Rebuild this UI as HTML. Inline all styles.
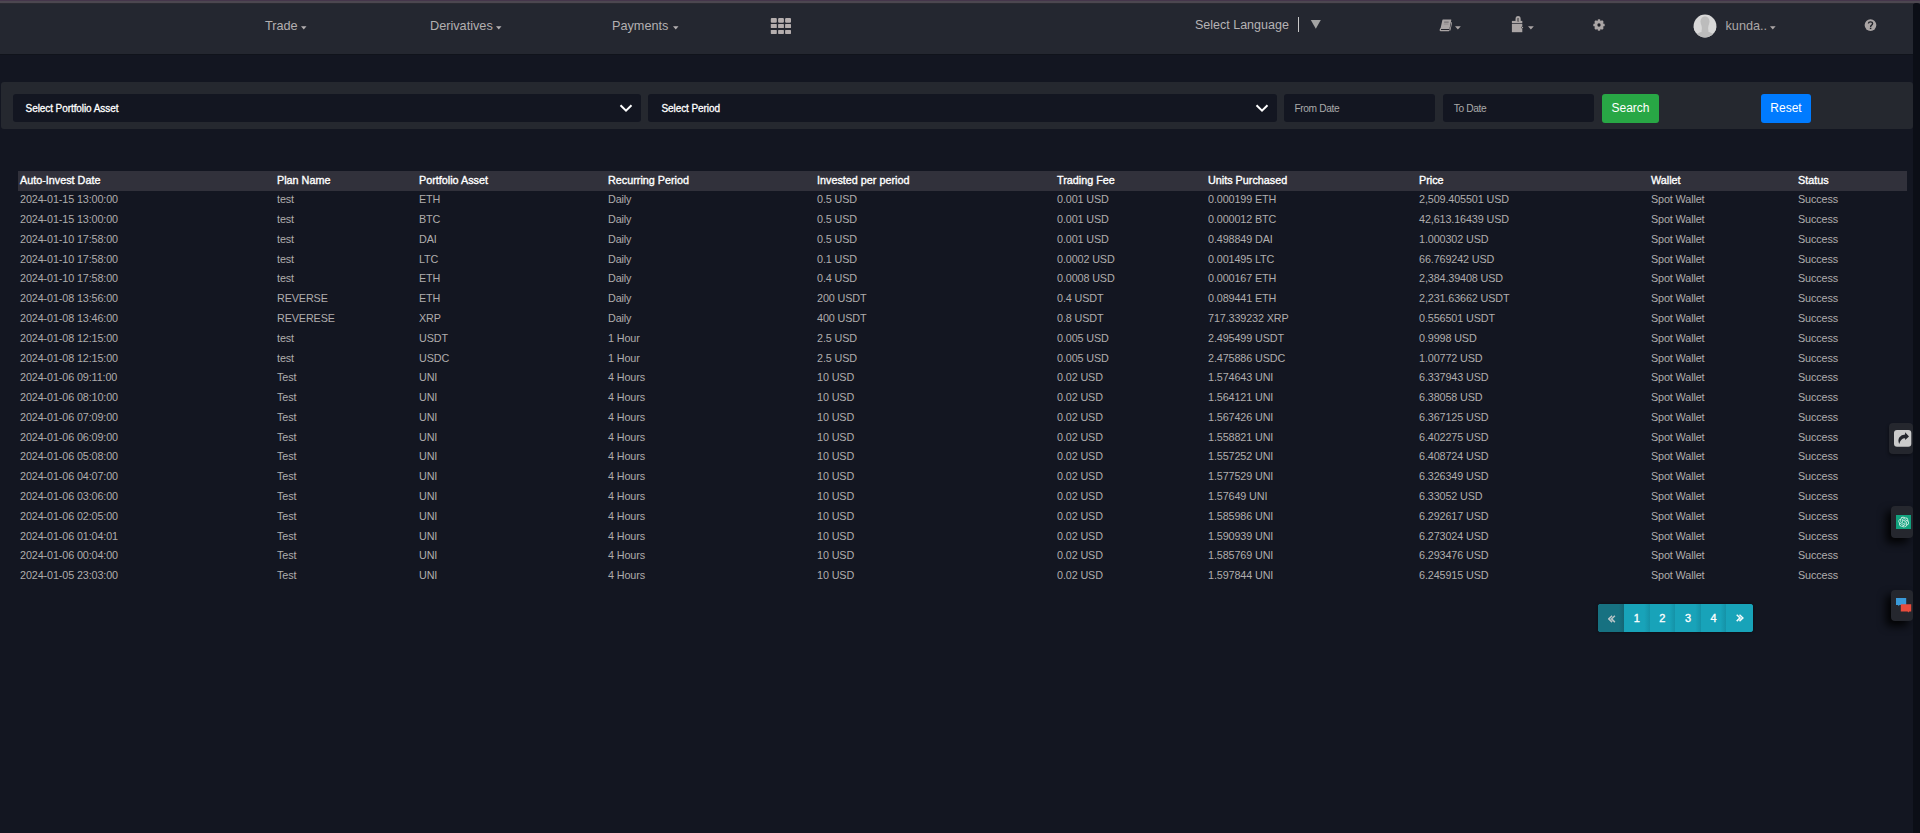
<!DOCTYPE html>
<html><head><meta charset="utf-8">
<style>
*{margin:0;padding:0;box-sizing:border-box}
html,body{width:1920px;height:833px;overflow:hidden;background:#131621;font-family:"Liberation Sans",sans-serif}
body{position:relative}
.a{position:absolute}
#topline{left:0;top:0;width:1920px;height:4px;background:linear-gradient(#45364b 0,#45364b 1px,#4c4750 1px,#4c4750 3px,#2b2b32 3px,#2b2b32 4px)}
#nav{left:0;top:4px;width:1913px;height:50px;background:#242730}
.nl{position:absolute;font-size:12.7px;color:#b3afb0;white-space:nowrap;line-height:15px}
.caret{position:absolute;width:0;height:0;border-left:2.7px solid transparent;border-right:2.7px solid transparent;border-top:3.4px solid #b3afb0}
#panel{left:1px;top:82px;width:1912px;height:47px;background:#25282f;border-radius:3px}
.sel{position:absolute;top:94px;height:28px;background:#131621;border-radius:3px}
.st{position:absolute;top:9px;font-size:10px;letter-spacing:-0.08px;color:#fff;-webkit-text-stroke:0.3px #fff;line-height:11px;white-space:nowrap}
.dt{color:#a9a9a9;-webkit-text-stroke:0;font-size:10.2px;letter-spacing:-0.35px;top:8.6px}
.chev{position:absolute;top:8.8px}
.btn{position:absolute;top:94px;height:29px;border-radius:3px;color:#fff;font-size:12px;text-align:center;line-height:29px}
#thead{left:18px;top:171px;width:1889px;height:20px;background:#31313b}
.th{position:absolute;top:3px;font-size:10.8px;color:#fff;-webkit-text-stroke:0.35px #fff;white-space:nowrap;line-height:13px}
.tr{position:absolute;left:0;height:20px;width:1900px}
.td{position:absolute;top:2px;font-size:10.8px;letter-spacing:-0.12px;color:#b0adad;white-space:nowrap;line-height:13px}
#pag{left:1598px;top:604px;width:155px;height:28px;border-radius:3px;overflow:hidden;background:#17a2b8;box-shadow:0 0 3px rgba(0,0,0,.5)}
.pg{position:absolute;top:0;height:28px;width:25.6px;color:#fff;font-size:11px;-webkit-text-stroke:0.35px #fff;text-align:center;line-height:28px;background:linear-gradient(90deg,#18a3b9 0,#18a3b9 78%,#1592a7 100%)}
.fl{position:absolute;background:#25272e;border-radius:4px;box-shadow:-5px 5px 8px rgba(0,0,0,.9)}
#scroll{left:1913px;top:3px;width:7px;height:830px;background:#0b0e16;border-radius:3px 3px 0 0}
#navsh{left:0;top:54px;width:1913px;height:1px;background:#10131b}
</style></head><body>
<div id="topline" class="a"></div>
<div id="nav" class="a">
  <div class="nl" style="left:265px;top:15px">Trade</div>
  <svg class="a" style="left:300.5px;top:21.6px" width="6" height="4" viewBox="0 0 6 4"><path d="M0 0.2 H5.5 L2.75 3.4 Z" fill="#b3afb0"/></svg>
  <div class="nl" style="left:430px;top:15px">Derivatives</div>
  <svg class="a" style="left:495.5px;top:21.6px" width="6" height="4" viewBox="0 0 6 4"><path d="M0 0.2 H5.5 L2.75 3.4 Z" fill="#b3afb0"/></svg>
  <div class="nl" style="left:612px;top:15px">Payments</div>
  <svg class="a" style="left:672.5px;top:21.6px" width="6" height="4" viewBox="0 0 6 4"><path d="M0 0.2 H5.5 L2.75 3.4 Z" fill="#b3afb0"/></svg>
  <svg class="a" style="left:770px;top:14px" width="22" height="16" viewBox="0 0 22 16">
    <g fill="#b5aeae">
      <rect x="0.8" y="0" width="6" height="4.8" rx="1"/><rect x="8.1" y="0" width="5.8" height="4.8" rx="1"/><rect x="15.1" y="0" width="5.9" height="4.8" rx="1"/>
      <rect x="0.8" y="5.9" width="6" height="4.1" rx="0.6"/><rect x="8.1" y="5.9" width="5.8" height="4.1" rx="0.6"/><rect x="15.1" y="5.9" width="5.9" height="4.1" rx="0.6"/>
      <rect x="0.8" y="11.9" width="6" height="4" rx="0.6"/><rect x="8.1" y="11.9" width="5.8" height="4" rx="0.6"/><rect x="15.1" y="11.9" width="5.9" height="4" rx="0.6"/>
    </g>
  </svg>
  <div class="nl" style="left:1195px;top:14px;font-size:12.5px;color:#b6b3b5">Select Language</div>
  <div class="a" style="left:1298px;top:13px;width:1.2px;height:14.8px;background:#c8c8c8"></div>
  <svg class="a" style="left:1310px;top:15px" width="12" height="10" viewBox="0 0 12 10"><path d="M0.8 1 L10.8 1 L5.8 9.8 Z" fill="#a3a3a3"/></svg>
  <!-- book -->
  <svg class="a" style="left:1439px;top:15px" width="14" height="13" viewBox="0 0 14 13">
    <path d="M3.9 0.6 H12 Q12.4 0.6 12.3 1.1 L10.5 9.4 H1.5 L3.4 1.1 Q3.5 0.6 3.9 0.6 Z" fill="#aaa5a5"/>
    <path d="M1.5 9 H10.6 L10.4 11.6 Q10.3 12.2 9.7 12.2 H1.5 Q0.4 12.2 0.6 10.8 Z" fill="#aaa5a5"/>
    <rect x="2" y="10" width="8" height="1" fill="#25262d"/>
    <path d="M11.5 3 Q13.2 3 13 4.2 L11.4 11.6 H10.6 L12.2 4.2 Q12.3 3.6 11.5 3.6 Z" fill="#aaa5a5"/>
    <rect x="5.1" y="2.4" width="4.6" height="1.5" fill="#807c7e"/>
    <rect x="4.8" y="4.5" width="4.6" height="1.1" fill="#938f90"/>
  </svg>
  <svg class="a" style="left:1454.6px;top:21.6px" width="6" height="4" viewBox="0 0 6 4"><path d="M0 0.2 H5.8 L2.9 3.5 Z" fill="#aaa5a5"/></svg>
  <!-- wallet -->
  <svg class="a" style="left:1511px;top:11px" width="13" height="18" viewBox="0 0 13 18">
    <path fill-rule="evenodd" d="M7.1 1 Q9.7 1 9.7 4.2 V7.4 H4.5 V4.2 Q4.5 1 7.1 1 Z M6.5 3.2 V6.8 H7.8 V3.2 Z" fill="#aaa5a5"/>
    <rect x="0.9" y="5.9" width="10.4" height="2.2" fill="#aaa5a5"/>
    <rect x="6.3" y="3.2" width="1.7" height="3.6" fill="#6d6a6c"/>
    <rect x="0.9" y="8.8" width="10.4" height="8.4" fill="#aaa5a5"/>
    <circle cx="11.4" cy="12.6" r="1.1" fill="#2a2a30"/>
    <circle cx="11.6" cy="12.6" r="0.55" fill="#d0cccc"/>
  </svg>
  <svg class="a" style="left:1528.3px;top:21.6px" width="6" height="4" viewBox="0 0 6 4"><path d="M0 0.2 H5.8 L2.9 3.5 Z" fill="#aaa5a5"/></svg>
  <!-- gear -->
  <svg class="a" style="left:1591.7px;top:14.35px" width="14" height="14" viewBox="0 0 14 14">
    <g transform="translate(7 7)" fill="#aaa5a5">
      <circle r="4.3"/>
      <g id="teeth"><rect x="-1.45" y="-5.7" width="2.9" height="3.2" rx="1.2"/></g>
      <use href="#teeth" transform="rotate(45)"/><use href="#teeth" transform="rotate(90)"/><use href="#teeth" transform="rotate(135)"/>
      <use href="#teeth" transform="rotate(180)"/><use href="#teeth" transform="rotate(225)"/><use href="#teeth" transform="rotate(270)"/><use href="#teeth" transform="rotate(315)"/>
      <circle r="1.65" fill="#1c1e25"/>
    </g>
  </svg>
  <!-- avatar -->
  <svg class="a" style="left:1693.3px;top:10.3px" width="24" height="24" viewBox="0 0 24 24">
    <defs><clipPath id="av"><circle cx="12" cy="12" r="11.4"/></clipPath></defs>
    <circle cx="12" cy="12" r="11.4" fill="#d8d8d8"/>
    <g clip-path="url(#av)">
      <ellipse cx="12" cy="26.5" rx="12.5" ry="9" fill="#bcbcbc"/>
      <rect x="8.6" y="9" width="6.8" height="10" fill="#bcbcbc"/>
      <ellipse cx="4.4" cy="14.2" rx="4.2" ry="3.8" fill="#d8d8d8"/>
      <ellipse cx="19.6" cy="14.2" rx="4.2" ry="3.8" fill="#d8d8d8"/>
      <ellipse cx="12" cy="7.6" rx="4.5" ry="5.4" fill="#bcbcbc"/>
    </g>
  </svg>
  <div class="nl" style="left:1725.5px;top:14.6px;color:#aca7a7">kunda..</div>
  <svg class="a" style="left:1769.8px;top:21.6px" width="6" height="4" viewBox="0 0 6 4"><path d="M0 0.2 H5.6 L2.8 3.4 Z" fill="#aca7a7"/></svg>
  <!-- help -->
  <svg class="a" style="left:1864px;top:15.3px" width="13" height="13" viewBox="0 0 13 13">
    <circle cx="6.5" cy="6.1" r="5.85" fill="#aaa5a5"/>
    <path d="M4.4 4.5 Q4.5 2.8 6.5 2.8 Q8.6 2.8 8.6 4.6 Q8.6 5.7 7.4 6.3 Q6.6 6.7 6.6 8.0" stroke="#1f2128" stroke-width="1.35" fill="none"/>
    <rect x="5.85" y="8.7" width="1.5" height="1.4" fill="#1f2128"/>
  </svg>
</div>

<div id="navsh" class="a"></div>
<div id="panel" class="a"></div>
<div class="sel" style="left:13px;width:628px">
  <div class="st" style="left:12.6px">Select Portfolio Asset</div>
  <svg class="chev" style="left:606px" width="14" height="10" viewBox="0 0 14 10"><path d="M1.5 2.2 L7 7.6 L12.5 2.2" stroke="#fff" stroke-width="2" fill="none"/></svg>
</div>
<div class="sel" style="left:648px;width:629px">
  <div class="st" style="left:13.5px">Select Period</div>
  <svg class="chev" style="left:607px" width="14" height="10" viewBox="0 0 14 10"><path d="M1.5 2.2 L7 7.6 L12.5 2.2" stroke="#fff" stroke-width="2" fill="none"/></svg>
</div>
<div class="sel" style="left:1284px;width:151px">
  <div class="st dt" style="left:10.4px">From Date</div>
</div>
<div class="sel" style="left:1443px;width:151px">
  <div class="st dt" style="left:10.7px">To Date</div>
</div>
<div class="btn" style="left:1602px;width:57px;background:#28a745">Search</div>
<div class="btn" style="left:1761px;width:50px;background:#007bff">Reset</div>

<div id="thead" class="a"><div class="th" style="left:2px">Auto-Invest Date</div><div class="th" style="left:259px">Plan Name</div><div class="th" style="left:401px">Portfolio Asset</div><div class="th" style="left:590px">Recurring Period</div><div class="th" style="left:799px">Invested per period</div><div class="th" style="left:1039px">Trading Fee</div><div class="th" style="left:1190px">Units Purchased</div><div class="th" style="left:1401px">Price</div><div class="th" style="left:1633px">Wallet</div><div class="th" style="left:1780px">Status</div></div>
<div class="tr" style="top:191px"><div class="td" style="left:20px">2024-01-15 13:00:00</div><div class="td" style="left:277px">test</div><div class="td" style="left:419px">ETH</div><div class="td" style="left:608px">Daily</div><div class="td" style="left:817px">0.5 USD</div><div class="td" style="left:1057px">0.001 USD</div><div class="td" style="left:1208px">0.000199 ETH</div><div class="td" style="left:1419px">2,509.405501 USD</div><div class="td" style="left:1651px">Spot Wallet</div><div class="td" style="left:1798px">Success</div></div>
<div class="tr" style="top:211px"><div class="td" style="left:20px">2024-01-15 13:00:00</div><div class="td" style="left:277px">test</div><div class="td" style="left:419px">BTC</div><div class="td" style="left:608px">Daily</div><div class="td" style="left:817px">0.5 USD</div><div class="td" style="left:1057px">0.001 USD</div><div class="td" style="left:1208px">0.000012 BTC</div><div class="td" style="left:1419px">42,613.16439 USD</div><div class="td" style="left:1651px">Spot Wallet</div><div class="td" style="left:1798px">Success</div></div>
<div class="tr" style="top:231px"><div class="td" style="left:20px">2024-01-10 17:58:00</div><div class="td" style="left:277px">test</div><div class="td" style="left:419px">DAI</div><div class="td" style="left:608px">Daily</div><div class="td" style="left:817px">0.5 USD</div><div class="td" style="left:1057px">0.001 USD</div><div class="td" style="left:1208px">0.498849 DAI</div><div class="td" style="left:1419px">1.000302 USD</div><div class="td" style="left:1651px">Spot Wallet</div><div class="td" style="left:1798px">Success</div></div>
<div class="tr" style="top:251px"><div class="td" style="left:20px">2024-01-10 17:58:00</div><div class="td" style="left:277px">test</div><div class="td" style="left:419px">LTC</div><div class="td" style="left:608px">Daily</div><div class="td" style="left:817px">0.1 USD</div><div class="td" style="left:1057px">0.0002 USD</div><div class="td" style="left:1208px">0.001495 LTC</div><div class="td" style="left:1419px">66.769242 USD</div><div class="td" style="left:1651px">Spot Wallet</div><div class="td" style="left:1798px">Success</div></div>
<div class="tr" style="top:270px"><div class="td" style="left:20px">2024-01-10 17:58:00</div><div class="td" style="left:277px">test</div><div class="td" style="left:419px">ETH</div><div class="td" style="left:608px">Daily</div><div class="td" style="left:817px">0.4 USD</div><div class="td" style="left:1057px">0.0008 USD</div><div class="td" style="left:1208px">0.000167 ETH</div><div class="td" style="left:1419px">2,384.39408 USD</div><div class="td" style="left:1651px">Spot Wallet</div><div class="td" style="left:1798px">Success</div></div>
<div class="tr" style="top:290px"><div class="td" style="left:20px">2024-01-08 13:56:00</div><div class="td" style="left:277px">REVERSE</div><div class="td" style="left:419px">ETH</div><div class="td" style="left:608px">Daily</div><div class="td" style="left:817px">200 USDT</div><div class="td" style="left:1057px">0.4 USDT</div><div class="td" style="left:1208px">0.089441 ETH</div><div class="td" style="left:1419px">2,231.63662 USDT</div><div class="td" style="left:1651px">Spot Wallet</div><div class="td" style="left:1798px">Success</div></div>
<div class="tr" style="top:310px"><div class="td" style="left:20px">2024-01-08 13:46:00</div><div class="td" style="left:277px">REVERESE</div><div class="td" style="left:419px">XRP</div><div class="td" style="left:608px">Daily</div><div class="td" style="left:817px">400 USDT</div><div class="td" style="left:1057px">0.8 USDT</div><div class="td" style="left:1208px">717.339232 XRP</div><div class="td" style="left:1419px">0.556501 USDT</div><div class="td" style="left:1651px">Spot Wallet</div><div class="td" style="left:1798px">Success</div></div>
<div class="tr" style="top:330px"><div class="td" style="left:20px">2024-01-08 12:15:00</div><div class="td" style="left:277px">test</div><div class="td" style="left:419px">USDT</div><div class="td" style="left:608px">1 Hour</div><div class="td" style="left:817px">2.5 USD</div><div class="td" style="left:1057px">0.005 USD</div><div class="td" style="left:1208px">2.495499 USDT</div><div class="td" style="left:1419px">0.9998 USD</div><div class="td" style="left:1651px">Spot Wallet</div><div class="td" style="left:1798px">Success</div></div>
<div class="tr" style="top:350px"><div class="td" style="left:20px">2024-01-08 12:15:00</div><div class="td" style="left:277px">test</div><div class="td" style="left:419px">USDC</div><div class="td" style="left:608px">1 Hour</div><div class="td" style="left:817px">2.5 USD</div><div class="td" style="left:1057px">0.005 USD</div><div class="td" style="left:1208px">2.475886 USDC</div><div class="td" style="left:1419px">1.00772 USD</div><div class="td" style="left:1651px">Spot Wallet</div><div class="td" style="left:1798px">Success</div></div>
<div class="tr" style="top:369px"><div class="td" style="left:20px">2024-01-06 09:11:00</div><div class="td" style="left:277px">Test</div><div class="td" style="left:419px">UNI</div><div class="td" style="left:608px">4 Hours</div><div class="td" style="left:817px">10 USD</div><div class="td" style="left:1057px">0.02 USD</div><div class="td" style="left:1208px">1.574643 UNI</div><div class="td" style="left:1419px">6.337943 USD</div><div class="td" style="left:1651px">Spot Wallet</div><div class="td" style="left:1798px">Success</div></div>
<div class="tr" style="top:389px"><div class="td" style="left:20px">2024-01-06 08:10:00</div><div class="td" style="left:277px">Test</div><div class="td" style="left:419px">UNI</div><div class="td" style="left:608px">4 Hours</div><div class="td" style="left:817px">10 USD</div><div class="td" style="left:1057px">0.02 USD</div><div class="td" style="left:1208px">1.564121 UNI</div><div class="td" style="left:1419px">6.38058 USD</div><div class="td" style="left:1651px">Spot Wallet</div><div class="td" style="left:1798px">Success</div></div>
<div class="tr" style="top:409px"><div class="td" style="left:20px">2024-01-06 07:09:00</div><div class="td" style="left:277px">Test</div><div class="td" style="left:419px">UNI</div><div class="td" style="left:608px">4 Hours</div><div class="td" style="left:817px">10 USD</div><div class="td" style="left:1057px">0.02 USD</div><div class="td" style="left:1208px">1.567426 UNI</div><div class="td" style="left:1419px">6.367125 USD</div><div class="td" style="left:1651px">Spot Wallet</div><div class="td" style="left:1798px">Success</div></div>
<div class="tr" style="top:429px"><div class="td" style="left:20px">2024-01-06 06:09:00</div><div class="td" style="left:277px">Test</div><div class="td" style="left:419px">UNI</div><div class="td" style="left:608px">4 Hours</div><div class="td" style="left:817px">10 USD</div><div class="td" style="left:1057px">0.02 USD</div><div class="td" style="left:1208px">1.558821 UNI</div><div class="td" style="left:1419px">6.402275 USD</div><div class="td" style="left:1651px">Spot Wallet</div><div class="td" style="left:1798px">Success</div></div>
<div class="tr" style="top:448px"><div class="td" style="left:20px">2024-01-06 05:08:00</div><div class="td" style="left:277px">Test</div><div class="td" style="left:419px">UNI</div><div class="td" style="left:608px">4 Hours</div><div class="td" style="left:817px">10 USD</div><div class="td" style="left:1057px">0.02 USD</div><div class="td" style="left:1208px">1.557252 UNI</div><div class="td" style="left:1419px">6.408724 USD</div><div class="td" style="left:1651px">Spot Wallet</div><div class="td" style="left:1798px">Success</div></div>
<div class="tr" style="top:468px"><div class="td" style="left:20px">2024-01-06 04:07:00</div><div class="td" style="left:277px">Test</div><div class="td" style="left:419px">UNI</div><div class="td" style="left:608px">4 Hours</div><div class="td" style="left:817px">10 USD</div><div class="td" style="left:1057px">0.02 USD</div><div class="td" style="left:1208px">1.577529 UNI</div><div class="td" style="left:1419px">6.326349 USD</div><div class="td" style="left:1651px">Spot Wallet</div><div class="td" style="left:1798px">Success</div></div>
<div class="tr" style="top:488px"><div class="td" style="left:20px">2024-01-06 03:06:00</div><div class="td" style="left:277px">Test</div><div class="td" style="left:419px">UNI</div><div class="td" style="left:608px">4 Hours</div><div class="td" style="left:817px">10 USD</div><div class="td" style="left:1057px">0.02 USD</div><div class="td" style="left:1208px">1.57649 UNI</div><div class="td" style="left:1419px">6.33052 USD</div><div class="td" style="left:1651px">Spot Wallet</div><div class="td" style="left:1798px">Success</div></div>
<div class="tr" style="top:508px"><div class="td" style="left:20px">2024-01-06 02:05:00</div><div class="td" style="left:277px">Test</div><div class="td" style="left:419px">UNI</div><div class="td" style="left:608px">4 Hours</div><div class="td" style="left:817px">10 USD</div><div class="td" style="left:1057px">0.02 USD</div><div class="td" style="left:1208px">1.585986 UNI</div><div class="td" style="left:1419px">6.292617 USD</div><div class="td" style="left:1651px">Spot Wallet</div><div class="td" style="left:1798px">Success</div></div>
<div class="tr" style="top:528px"><div class="td" style="left:20px">2024-01-06 01:04:01</div><div class="td" style="left:277px">Test</div><div class="td" style="left:419px">UNI</div><div class="td" style="left:608px">4 Hours</div><div class="td" style="left:817px">10 USD</div><div class="td" style="left:1057px">0.02 USD</div><div class="td" style="left:1208px">1.590939 UNI</div><div class="td" style="left:1419px">6.273024 USD</div><div class="td" style="left:1651px">Spot Wallet</div><div class="td" style="left:1798px">Success</div></div>
<div class="tr" style="top:547px"><div class="td" style="left:20px">2024-01-06 00:04:00</div><div class="td" style="left:277px">Test</div><div class="td" style="left:419px">UNI</div><div class="td" style="left:608px">4 Hours</div><div class="td" style="left:817px">10 USD</div><div class="td" style="left:1057px">0.02 USD</div><div class="td" style="left:1208px">1.585769 UNI</div><div class="td" style="left:1419px">6.293476 USD</div><div class="td" style="left:1651px">Spot Wallet</div><div class="td" style="left:1798px">Success</div></div>
<div class="tr" style="top:567px"><div class="td" style="left:20px">2024-01-05 23:03:00</div><div class="td" style="left:277px">Test</div><div class="td" style="left:419px">UNI</div><div class="td" style="left:608px">4 Hours</div><div class="td" style="left:817px">10 USD</div><div class="td" style="left:1057px">0.02 USD</div><div class="td" style="left:1208px">1.597844 UNI</div><div class="td" style="left:1419px">6.245915 USD</div><div class="td" style="left:1651px">Spot Wallet</div><div class="td" style="left:1798px">Success</div></div>

<div id="pag" class="a">
  <div class="pg" style="left:0;width:26px;background:linear-gradient(90deg,#177181 0,#177181 80%,#146574 100%)">
    <svg class="a" style="left:9.5px;top:10.5px" width="8" height="8" viewBox="0 0 8 8"><path d="M4.1 0.7 L0.7 3.9 L4.1 7.1 M6.9 0.7 L3.5 3.9 L6.9 7.1" stroke="#b9c4c7" stroke-width="1.45" fill="none"/></svg>
  </div>
  <div class="pg" style="left:26px">1</div>
  <div class="pg" style="left:51.6px">2</div>
  <div class="pg" style="left:77.2px">3</div>
  <div class="pg" style="left:102.8px">4</div>
  <div class="pg" style="left:128.4px;width:26.6px;background:#18a3b9">
    <svg class="a" style="left:9.7px;top:10.3px" width="8" height="8" viewBox="0 0 8 8"><path d="M0.7 0.7 L4.1 3.9 L0.7 7.1 M3.5 0.7 L6.9 3.9 L3.5 7.1" stroke="#f2fafb" stroke-width="1.45" fill="none"/></svg>
  </div>
</div>

<div class="fl" style="left:1889px;top:423px;width:24px;height:31px;box-shadow:-1px 2px 3px rgba(0,0,0,.3)">
  <svg class="a" style="left:5.3px;top:6.8px" width="18" height="18" viewBox="0 0 18 18">
    <rect x="0" y="0" width="17.3" height="16.8" rx="3" fill="#cbcbcb"/>
    <path d="M11.1 2.25 L15 6.4 L11.1 10 V8.3 Q6.8 8.2 5.2 14.1 Q3.5 9.8 5.4 7.2 Q7.3 4.6 11.1 4.6 Z" fill="#23252c"/>
  </svg>
</div>
<div class="fl" style="left:1891px;top:506px;width:22px;height:32px">
  <svg class="a" style="left:5px;top:9px" width="15" height="14" viewBox="0 0 15 14">
    <rect x="0" y="0" width="15.2" height="14.1" fill="#12a27e"/>
    <g transform="translate(2.4 1.8) scale(0.44)"><path d="M22.2819 9.8211a5.9847 5.9847 0 0 0-.5157-4.9108 6.0462 6.0462 0 0 0-6.5098-2.9A6.0651 6.0651 0 0 0 4.9807 4.1818a5.9847 5.9847 0 0 0-3.9977 2.9 6.0462 6.0462 0 0 0 .7427 7.0966 5.98 5.98 0 0 0 .511 4.9107 6.051 6.051 0 0 0 6.5146 2.9001A5.9847 5.9847 0 0 0 13.2599 24a6.0557 6.0557 0 0 0 5.7718-4.2058 5.9894 5.9894 0 0 0 3.9977-2.9001 6.0557 6.0557 0 0 0-.7475-7.0729zm-9.022 12.6081a4.4755 4.4755 0 0 1-2.8764-1.0408l.1419-.0804 4.7783-2.7582a.7948.7948 0 0 0 .3927-.6813v-6.7369l2.02 1.1686a.071.071 0 0 1 .038.052v5.5826a4.504 4.504 0 0 1-4.4945 4.4944zm-9.6607-4.1254a4.4708 4.4708 0 0 1-.5346-3.0137l.142.0852 4.783 2.7582a.7712.7712 0 0 0 .7806 0l5.8428-3.3685v2.3324a.0804.0804 0 0 1-.0332.0615L9.74 19.9502a4.4992 4.4992 0 0 1-6.1408-1.6464zM2.3408 7.8956a4.485 4.485 0 0 1 2.3655-1.9728V11.6a.7664.7664 0 0 0 .3879.6765l5.8144 3.3543-2.0201 1.1685a.0757.0757 0 0 1-.071 0l-4.8303-2.7865A4.504 4.504 0 0 1 2.3408 7.872zm16.5963 3.8558L13.1038 8.364 15.1192 7.2a.0757.0757 0 0 1 .071 0l4.8303 2.7913a4.4944 4.4944 0 0 1-.6765 8.1042v-5.6772a.79.79 0 0 0-.407-.667zm2.0107-3.0231l-.142-.0852-4.7735-2.7818a.7759.7759 0 0 0-.7854 0L9.409 9.2297V6.8974a.0662.0662 0 0 1 .0284-.0615l4.8303-2.7866a4.4992 4.4992 0 0 1 6.6802 4.66zM8.3065 12.863l-2.02-1.1638a.0804.0804 0 0 1-.038-.0567V6.0742a4.4992 4.4992 0 0 1 7.3757-3.4537l-.142.0805L8.704 5.459a.7948.7948 0 0 0-.3927.6813zm1.0976-2.3654l2.602-1.4998 2.6069 1.4998v2.9994l-2.5974 1.4997-2.6067-1.4997Z" fill="#eaf6f2"/></g>
  </svg>
</div>
<div class="fl" style="left:1891px;top:590px;width:22px;height:31px">
  <svg class="a" style="left:4.9px;top:7.8px" width="17" height="15" viewBox="0 0 17 15">
    <path d="M0 0 H10.2 V7 H3.5 L2.6 8.2 L2.2 7 H0 Z" fill="#3a9ad9"/>
    <path d="M4.8 6.2 H15.2 V13.4 H13.2 L12.4 14.4 L11.6 13.4 H4.8 Z" fill="#e74c3c"/>
  </svg>
</div>
<div id="scroll" class="a"></div>
</body></html>
